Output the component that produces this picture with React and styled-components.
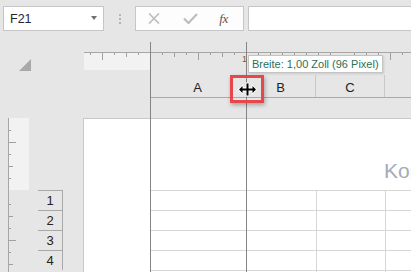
import React from "react";
import styled, { createGlobalStyle } from "styled-components";

const GlobalStyle = createGlobalStyle`
  html, body {
    margin: 0;
    padding: 0;
    background: #e6e6e6;
    overflow: hidden;
  }
  body {
    font-family: "Liberation Sans", Arial, sans-serif;
  }
`;

const Screen = styled.div`
  width: 411px;
  height: 272px;
  background: #e6e6e6;
  overflow: hidden;
  display: flex;
  flex-direction: column;
`;

/* ---------- formula toolbar ---------- */

const Toolbar = styled.div`
  height: 40px;
  flex: none;
  display: flex;
  align-items: flex-start;
  padding: 6px 0 0 3px;
  box-sizing: border-box;
`;

const NameBox = styled.div`
  width: 101px;
  height: 25px;
  box-sizing: border-box;
  background: #fff;
  border: 1px solid #c6c6c6;
  display: flex;
  align-items: center;
  justify-content: space-between;
  padding: 0 6px 0 6px;
  font-size: 12.5px;
  color: #262626;
`;

const DropArrow = styled.span`
  width: 0;
  height: 0;
  border-left: 3.5px solid transparent;
  border-right: 3.5px solid transparent;
  border-top: 4px solid #707070;
  margin-top: -1px;
`;

const Grip = styled.div`
  width: 31px;
  height: 25px;
  display: flex;
  flex-direction: column;
  align-items: center;
  justify-content: center;
  gap: 2px;
`;

const GripDot = styled.span`
  width: 2px;
  height: 2px;
  background: #b4b4b4;
`;

const FnBox = styled.div`
  width: 109px;
  height: 25px;
  box-sizing: border-box;
  background: #fdfdfd;
  border: 1px solid #c6c6c6;
  display: grid;
  grid-template-columns: 36px 36px 1fr;
  align-items: center;
  justify-items: center;
`;

const FxLabel = styled.span`
  font-family: "Liberation Serif", "Times New Roman", serif;
  font-style: italic;
  font-size: 13px;
  color: #555;
  letter-spacing: -0.5px;
  margin-left: -4px;
`;

const FormulaInput = styled.div`
  flex: 1;
  height: 25px;
  box-sizing: border-box;
  background: #fff;
  border: 1px solid #c6c6c6;
  margin-left: 4px;
  margin-right: -2px;
`;

/* ---------- sheet workspace ---------- */

const Workspace = styled.div`
  position: relative;
  flex: 1;
  display: grid;
  grid-template-columns: 83px 1fr;
  grid-template-rows: 78px 1fr;
`;

const Corner = styled.div`
  padding: 17px 0 0 19px;
`;

const TopArea = styled.div`
  padding-top: 12px;
  padding-left: 1px;
  display: flex;
  flex-direction: column;
`;

const HRuler = styled.div`
  position: relative;
  height: 18px;
  border-top: 1px solid #a6a6a6;
  box-sizing: border-box;
  display: flex;
`;

const RulerMargin = styled.div`
  width: ${(p) => p.$w}px;
  height: ${(p) => p.$h}px;
  background: #f2f2f2;
  flex: none;
`;

const RulerSvg = styled.svg`
  position: absolute;
  left: 0;
  top: 0;
  overflow: visible;
`;

const ColHeaderRow = styled.div`
  margin-top: 5px;
  margin-left: 66px;
  height: 22px;
  border-bottom: 1px solid #a9a9a9;
  display: grid;
  grid-template-columns: 96px 70px 69px 1fr;
`;

const ColHeader = styled.div`
  display: flex;
  align-items: center;
  justify-content: center;
  font-size: 13px;
  color: #222;
  padding-top: 2px;
  border-right: 1px solid ${(p) => (p.$sep ? "#c8c8c8" : "transparent")};
`;

const Gutter = styled.div`
  position: relative;
  display: flex;
`;

const VRuler = styled.div`
  position: relative;
  width: 29px;
  margin-left: 8px;
  border-left: 1px solid #a6a6a6;
  flex: none;
`;

const RowHeaders = styled.div`
  margin-top: 72px;
  width: 25px;
  display: flex;
  flex-direction: column;
`;

const RowHeader = styled.div`
  height: 20px;
  box-sizing: border-box;
  border-top: 1px solid #a9a9a9;
  border-right: 1px solid #a9a9a9;
  display: flex;
  align-items: center;
  justify-content: center;
  font-size: 13px;
  color: #222;
`;

const Page = styled.div`
  background: #fff;
  border-top: 1px solid #c8c8c8;
  border-left: 1px solid #c8c8c8;
  overflow: hidden;
  display: flex;
  flex-direction: column;
`;

const HeaderZone = styled.div`
  height: 71px;
  flex: none;
  display: flex;
  align-items: flex-end;
  padding-left: 300px;
  box-sizing: border-box;
  white-space: nowrap;
`;

const HeaderText = styled.span`
  font-size: 21px;
  color: #a4acb6;
  line-height: 1;
  margin-bottom: 9px;
`;

const CellGrid = styled.div`
  margin-left: 66px;
  display: grid;
  grid-template-columns: 96px 70px 69px 1fr;
  grid-auto-rows: 20px;
`;

const Cell = styled.div`
  border-top: 1px solid #d6d6d6;
  border-left: 1px solid #d6d6d6;
`;

/* ---------- overlays ---------- */

const Guide = styled.div`
  position: absolute;
  top: 2px;
  bottom: 0;
  left: ${(p) => p.$x}px;
  width: 1px;
  background: #848484;
`;

const Tooltip = styled.div`
  position: absolute;
  left: 248px;
  top: 15px;
  height: 18px;
  box-sizing: border-box;
  padding: 0 3px;
  background: #fff;
  border: 1px solid #c4c4c4;
  box-shadow: 1px 1px 2px rgba(0, 0, 0, 0.12);
  font-size: 11px;
  line-height: 16px;
  color: #2b6f58;
  white-space: nowrap;
`;

const Highlight = styled.div`
  position: absolute;
  left: 230px;
  top: 35px;
  width: 34px;
  height: 28px;
  box-sizing: border-box;
  border: 3px solid #e5474b;
  box-shadow: 1px 2px 4px rgba(0, 0, 0, 0.3);
  display: flex;
  align-items: center;
  justify-content: center;
`;

const CrossIcon = () => (
  <svg width="12" height="11" viewBox="0 0 12 11">
    <path d="M1 0.5 L11 10.5 M11 0.5 L1 10.5" stroke="#bdbdbd" strokeWidth="1.6" fill="none" />
  </svg>
);

const CheckIcon = () => (
  <svg width="15" height="11" viewBox="0 0 15 11">
    <path d="M1 5.5 L5.5 10 L14 1" stroke="#bdbdbd" strokeWidth="2.2" fill="none" />
  </svg>
);

const ResizeCursor = () => (
  <svg width="21" height="15" viewBox="0 0 21 15">
    <path
      d="M8.5 0.5 H12.5 V5 H14.5 V1.5 L20.5 7.5 L14.5 13.5 V10 H12.5 V14.5 H8.5 V10 H6.5 V13.5 L0.5 7.5 L6.5 1.5 V5 H8.5 Z"
      fill="#fff"
      stroke="#e0e0e0"
      strokeWidth="0.5"
    />
    <path
      d="M9.5 1.5 H11.5 V6.5 H15.5 V4 L19 7.5 L15.5 11 V8.5 H11.5 V13.5 H9.5 V8.5 H5.5 V11 L2 7.5 L5.5 4 V6.5 H9.5 Z"
      fill="#000"
    />
  </svg>
);

const tickLen = (k) => (k % 4 === 0 ? 7 : k % 2 === 0 ? 4 : 2);

const HorizontalTicks = () => {
  const ticks = [];
  for (let k = -5; k <= 22; k++) {
    if (k % 8 === 0) continue;
    const x = 66 + 12 * k + 0.5;
    ticks.push(<line key={k} x1={x} x2={x} y1={0} y2={tickLen(k)} stroke="#a0a0a0" />);
  }
  return (
    <RulerSvg width="330" height="17">
      {ticks}
      <text x="158" y="9" fontSize="9" fill="#7a5a3a" fontFamily="Liberation Sans, Arial, sans-serif">
        1
      </text>
    </RulerSvg>
  );
};

const VerticalTicks = () => {
  const ticks = [];
  for (let k = -5; k <= 6; k++) {
    if (k === 0) continue;
    const y = 72 + 12 * k + (k > 0 ? 2 : 0) + 0.5;
    ticks.push(<line key={k} y1={y} y2={y} x1={0} x2={tickLen(k)} stroke="#a0a0a0" />);
  }
  return (
    <RulerSvg width="28" height="160">
      {ticks}
    </RulerSvg>
  );
};

const columns = [
  { label: "A", sep: false },
  { label: "B", sep: true },
  { label: "C", sep: true },
  { label: "", sep: false },
];

const rows = [1, 2, 3, 4];

export default function App() {
  return (
    <Screen>
      <GlobalStyle />
      <Toolbar>
        <NameBox>
          <span>F21</span>
          <DropArrow />
        </NameBox>
        <Grip>
          <GripDot />
          <GripDot />
          <GripDot />
        </Grip>
        <FnBox>
          <CrossIcon />
          <CheckIcon />
          <FxLabel>fx</FxLabel>
        </FnBox>
        <FormulaInput />
      </Toolbar>

      <Workspace>
        <Corner>
          <svg width="12" height="12" viewBox="0 0 12 12">
            <path d="M12 0 V12 H0 Z" fill="#a9a9a9" />
          </svg>
        </Corner>

        <TopArea>
          <HRuler>
            <RulerMargin $w={66} $h={17} />
            <HorizontalTicks />
          </HRuler>
          <ColHeaderRow>
            {columns.map((c, i) => (
              <ColHeader key={i} $sep={c.sep}>
                {c.label}
              </ColHeader>
            ))}
          </ColHeaderRow>
        </TopArea>

        <Gutter>
          <VRuler>
            <RulerMargin $w={20} $h={72} />
            <VerticalTicks />
          </VRuler>
          <RowHeaders>
            {rows.map((r) => (
              <RowHeader key={r}>{r}</RowHeader>
            ))}
          </RowHeaders>
        </Gutter>

        <Page>
          <HeaderZone>
            <HeaderText>Kopfzeile</HeaderText>
          </HeaderZone>
          <CellGrid>
            {rows.map((r) =>
              columns.map((c, i) => <Cell key={`${r}-${i}`} />)
            )}
            {columns.map((c, i) => (
              <Cell key={`x-${i}`} />
            ))}
          </CellGrid>
        </Page>

        <Guide $x={150} />
        <Guide $x={246} />
        <Tooltip>Breite: 1,00 Zoll (96 Pixel)</Tooltip>
        <Highlight>
          <ResizeCursor />
        </Highlight>
      </Workspace>
    </Screen>
  );
}
